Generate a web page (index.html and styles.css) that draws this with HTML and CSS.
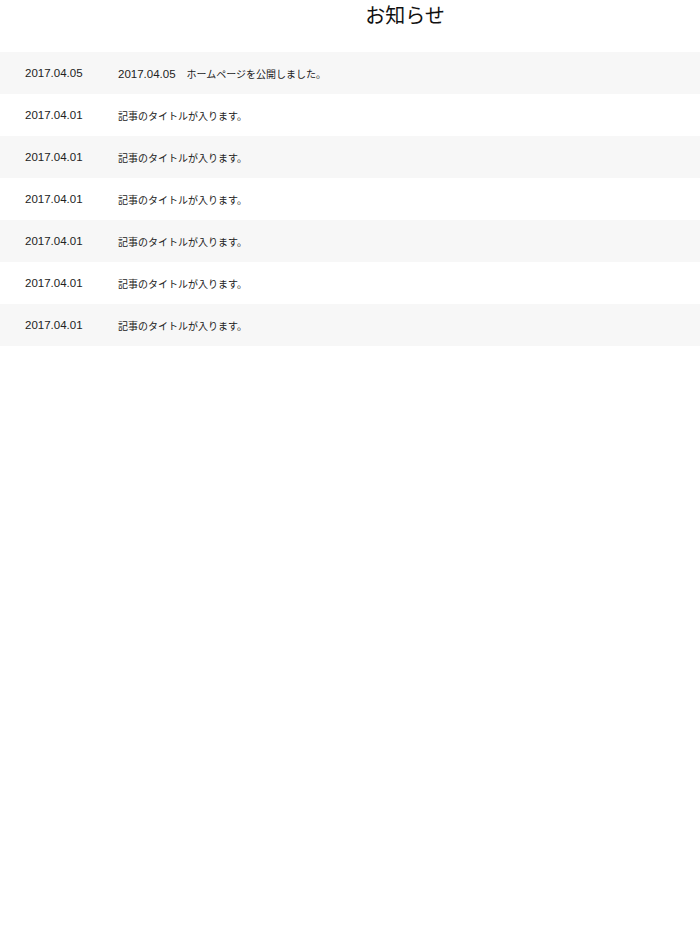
FILE: index.html
```html
<!DOCTYPE html>
<html lang="ja">
<head>
<meta charset="utf-8">
<title>お知らせ</title>
<link rel="stylesheet" href="styles.css">
</head>
<body>
<h1 class="title">お知らせ</h1>
<ul class="news">
  <li class="row"><span class="date">2017.04.05</span><span class="text"><span class="num">2017.04.05</span>　ホームページを公開しました。</span></li>
  <li class="row"><span class="date">2017.04.01</span><span class="text">記事のタイトルが入ります。</span></li>
  <li class="row"><span class="date">2017.04.01</span><span class="text">記事のタイトルが入ります。</span></li>
  <li class="row"><span class="date">2017.04.01</span><span class="text">記事のタイトルが入ります。</span></li>
  <li class="row"><span class="date">2017.04.01</span><span class="text">記事のタイトルが入ります。</span></li>
  <li class="row"><span class="date">2017.04.01</span><span class="text">記事のタイトルが入ります。</span></li>
  <li class="row"><span class="date">2017.04.01</span><span class="text">記事のタイトルが入ります。</span></li>
</ul>
</body>
</html>
```
FILE: styles.css
```css
html, body {
  margin: 0;
  padding: 0;
  background: #fff;
}
body {
  font-family: "Noto Sans CJK JP", "Noto Sans", sans-serif;
  color: #222;
}
.title {
  margin: 0;
  height: 52px;
  padding: 0 0 0 110px;
  text-align: center;
  font-size: 20px;
  font-weight: normal;
  line-height: 30px;
  color: #111;
}
.news {
  list-style: none;
  margin: 0;
  padding: 0;
}
.row {
  display: flex;
  align-items: center;
  height: 42px;
  padding-left: 25px;
}
.row:nth-child(odd) {
  background: #f7f7f7;
}
.date {
  width: 93px;
  flex: none;
  font-family: "Liberation Sans", "Noto Sans CJK JP", sans-serif;
  font-size: 11.5px;
}
.text {
  font-size: 10px;
}
.num {
  font-family: "Liberation Sans", "Noto Sans CJK JP", sans-serif;
  font-size: 11.5px;
  margin-right: 1px;
}
```
